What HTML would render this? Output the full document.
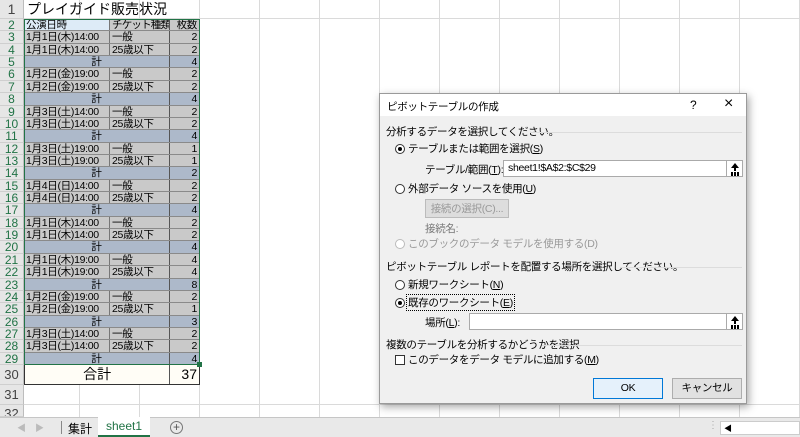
<!DOCTYPE html>
<html><head><meta charset="utf-8"><style>
*{margin:0;padding:0;box-sizing:border-box}
body{width:800px;height:437px;overflow:hidden;background:#fff;position:relative;font-family:"Liberation Sans","Noto Sans CJK JP",sans-serif;font-size:11px;color:#000}
.grid{position:absolute;left:0;top:0;width:800px;height:417px;
background-image:linear-gradient(to right,#dadada 1px,transparent 1px);background-size:60px 100%;background-position:19px 0}
.hl{position:absolute;left:0;width:800px;height:1px;background:#dadada}
.rh{position:absolute;left:0;width:24px;background:#e6e6e6;border-right:1px solid #bdbdbd;border-bottom:1px solid #cfcfcf;text-align:center;color:#217346;font-size:12px;line-height:12px}
.r{position:absolute;left:24px;width:175px;display:flex;border-bottom:1px solid #8a8a8a}
.r div{height:100%;overflow:hidden;white-space:nowrap;line-height:12px;font-size:10.5px;letter-spacing:-0.3px}
.a{width:86px;border-right:1px solid #777;padding-left:2px}
.b{width:60px;border-right:1px solid #555;padding-left:2px}
.c{width:29px;text-align:right;padding-right:2px}
.d{background:#c9c9c9}
.s{background:#adb9ca}
.s .m{width:146px;text-align:center;border-right:1px solid #555}
.dlg{position:absolute;left:379px;top:93px;width:368px;height:311px;background:#f0f0f0;border:1px solid #9a9a9a;box-shadow:2px 3px 8px rgba(0,0,0,.35);font-size:10.5px;letter-spacing:-0.3px}
.dlg .t{position:absolute;left:0;top:0;width:100%;height:22px;background:#fff}
.ab{position:absolute;white-space:nowrap}
.rad{position:absolute;width:10px;height:10px;border:1px solid #333;border-radius:50%;background:#fff}
.rad.on::after{content:"";position:absolute;left:2px;top:2px;width:4px;height:4px;border-radius:50%;background:#000}
.sep{position:absolute;height:1px;background:#dcdcdc}
.inp{position:absolute;background:#fff;border:1px solid #aaa;height:17px}
.ub{position:absolute;right:0;top:0;width:16px;height:15px;border-left:1px solid #aaa}
.ub::before{content:"";position:absolute;left:4px;top:2px;border-left:4px solid transparent;border-right:4px solid transparent;border-bottom:5px solid #000}
.ub::after{content:"";position:absolute;left:7px;top:6px;width:2px;height:4px;background:#000;box-shadow:-3px 5px 0 -0px #000,0 5px 0 #000,3px 5px 0 #000}
.btn{position:absolute;border:1px solid #adadad;background:#e1e1e1;text-align:center;line-height:18px}
</style></head><body>
<div class="grid"></div>
<div style="position:absolute;left:0;top:0;width:24px;height:417px;background:#e6e6e6;border-right:1px solid #bdbdbd"></div>
<div class="rh" style="top:0;height:19px;line-height:19px;color:#444;font-size:14px">1</div>
<div class="ab" style="left:27px;top:1px;font-size:14px;line-height:17px">プレイガイド販売状況</div>
<div class="hl" style="top:18px;left:24px"></div>
<div id="rows"></div>
<div style="position:absolute;left:24px;top:19px;width:176px;height:346px;border:1px solid #217346;pointer-events:none;z-index:3"></div>
<div style="position:absolute;left:197px;top:362px;width:5px;height:5px;background:#217346;z-index:4"></div>
<script>
(function(){
var data=[["公演日時","チケット種類","枚数","h"],
["1月1日(木)14:00","一般","2"],["1月1日(木)14:00","25歳以下","2"],["計","","4","s"],
["1月2日(金)19:00","一般","2"],["1月2日(金)19:00","25歳以下","2"],["計","","4","s"],
["1月3日(土)14:00","一般","2"],["1月3日(土)14:00","25歳以下","2"],["計","","4","s"],
["1月3日(土)19:00","一般","1"],["1月3日(土)19:00","25歳以下","1"],["計","","2","s"],
["1月4日(日)14:00","一般","2"],["1月4日(日)14:00","25歳以下","2"],["計","","4","s"],
["1月1日(木)14:00","一般","2"],["1月1日(木)14:00","25歳以下","2"],["計","","4","s"],
["1月1日(木)19:00","一般","4"],["1月1日(木)19:00","25歳以下","4"],["計","","8","s"],
["1月2日(金)19:00","一般","2"],["1月2日(金)19:00","25歳以下","1"],["計","","3","s"],
["1月3日(土)14:00","一般","2"],["1月3日(土)14:00","25歳以下","2"],["計","","4","s"]];
var h="",rh=12.36;
for(var i=0;i<data.length;i++){var tp=19+i*rh,d=data[i];
h+='<div class="rh" style="top:'+tp+'px;height:'+rh+'px">'+(i+2)+'</div>';
if(d[3]=="s")h+='<div class="r s" style="top:'+tp+'px;height:'+rh+'px"><div class="m">計</div><div class="c">'+d[2]+'</div></div>';
else if(d[3]=="h")h+='<div class="r" style="top:'+tp+'px;height:'+rh+'px"><div class="a" style="background:#ddebf7">'+d[0]+'</div><div class="b d" style="letter-spacing:-0.8px">'+d[1]+'</div><div class="c d">'+d[2]+'</div></div>';
else h+='<div class="r d" style="top:'+tp+'px;height:'+rh+'px"><div class="a">'+d[0]+'</div><div class="b">'+d[1]+'</div><div class="c">'+d[2]+'</div></div>';}
document.getElementById("rows").outerHTML=h;
})();
</script>
<div class="rh" style="top:365px;height:20px;line-height:20px;color:#444;font-size:13px">30</div>
<div class="ab" style="left:24px;top:365px;width:176px;height:20px;background:#fffdf6;border:1px solid #333;border-top:none;display:flex">
<div style="width:146px;border-right:1px solid #555;text-align:center;font-size:14px;line-height:19px">合計</div><div style="width:29px;text-align:right;padding-right:2px;font-size:14px;line-height:19px">37</div></div>
<div class="rh" style="top:385px;height:20px;line-height:20px;color:#444;font-size:13px">31</div>
<div class="hl" style="top:404px;left:24px"></div>
<div class="rh" style="top:405px;height:12px;line-height:18px;color:#444;font-size:13px;overflow:hidden">32</div>
<div style="position:absolute;left:0;top:417px;width:800px;height:20px;background:#e9e9e9;border-top:1px solid #c6c6c6">
<span class="ab" style="left:17px;top:3px;color:#bbb;font-size:9px">◀</span><span class="ab" style="left:35px;top:3px;color:#bbb;font-size:9px">▶</span>
<div class="ab" style="left:61px;top:3px;width:1px;height:13px;background:#888"></div>
<span class="ab" style="left:68px;top:2px;font-size:12px">集計</span>
<div class="ab" style="left:98px;top:-1px;width:52px;height:20px;background:#fff;border-bottom:2px solid #217346;color:#217346;font-size:12px;text-align:center;line-height:18px">sheet1</div>
<div class="ab" style="left:170px;top:3px;width:13px;height:13px;border:1px solid #777;border-radius:50%;text-align:center;line-height:11px;font-size:12px;color:#555">+</div>
<span class="ab" style="left:708px;top:2px;color:#aaa;font-size:10px">⋮</span>
<div class="ab" style="left:720px;top:3px;width:80px;height:14px;background:#fff;border:1px solid #ccc"><span style="font-size:8px;margin-left:3px">◀</span></div>
</div>
<div class="dlg">
<div class="t"></div>
<span class="ab" style="left:7px;top:5px">ピボットテーブルの作成</span>
<span class="ab" style="left:310px;top:4px;font-size:12px">?</span>
<span class="ab" style="left:344px;top:1px;font-size:16px">×</span>
<span class="ab" style="left:6px;top:30px">分析するデータを選択してください。</span>
<div class="sep" style="left:150px;top:38px;width:212px"></div>
<div class="rad on" style="left:15px;top:50px"></div><span class="ab" style="left:28px;top:47px">テーブルまたは範囲を選択(<u>S</u>)</span>
<span class="ab" style="left:45px;top:68px">テーブル/範囲(<u>T</u>):</span>
<div class="inp" style="left:123px;top:66px;width:240px"><span style="margin-left:4px;line-height:15px">sheet1!$A$2:$C$29</span><div class="ub"></div></div>
<div class="rad" style="left:15px;top:90px"></div><span class="ab" style="left:28px;top:87px">外部データ ソースを使用(<u>U</u>)</span>
<div class="btn" style="left:45px;top:105px;width:84px;height:19px;color:#999;background:#ddd;border-color:#bbb">接続の選択(C)...</div>
<span class="ab" style="left:45px;top:127px;color:#777">接続名:</span>
<div class="rad" style="left:15px;top:145px;border-color:#bbb"></div><span class="ab" style="left:28px;top:142px;color:#999">このブックのデータ モデルを使用する(D)</span>
<span class="ab" style="left:6px;top:165px">ピボットテーブル レポートを配置する場所を選択してください。</span>
<div class="sep" style="left:240px;top:173px;width:122px"></div>
<div class="rad" style="left:15px;top:186px"></div><span class="ab" style="left:28px;top:183px">新規ワークシート(<u>N</u>)</span>
<div class="rad on" style="left:15px;top:204px"></div><span class="ab" style="left:26px;top:200px;border:1px dotted #000;padding:0 1px">既存のワークシート(<u>E</u>)</span>
<span class="ab" style="left:45px;top:221px">場所(<u>L</u>):</span>
<div class="inp" style="left:89px;top:219px;width:274px"><div class="ub"></div></div>
<span class="ab" style="left:6px;top:243px">複数のテーブルを分析するかどうかを選択</span>
<div class="sep" style="left:162px;top:251px;width:200px"></div>
<div class="ab" style="left:15px;top:261px;width:10px;height:10px;border:1px solid #333;background:#fff"></div>
<span class="ab" style="left:28px;top:258px">このデータをデータ モデルに追加する(<u>M</u>)</span>
<div class="btn" style="left:213px;top:284px;width:70px;height:21px;border:1px solid #0078d7;background:#e5f1fb;line-height:19px">OK</div>
<div class="btn" style="left:292px;top:284px;width:70px;height:21px;line-height:19px">キャンセル</div>
</div>
</body></html>
